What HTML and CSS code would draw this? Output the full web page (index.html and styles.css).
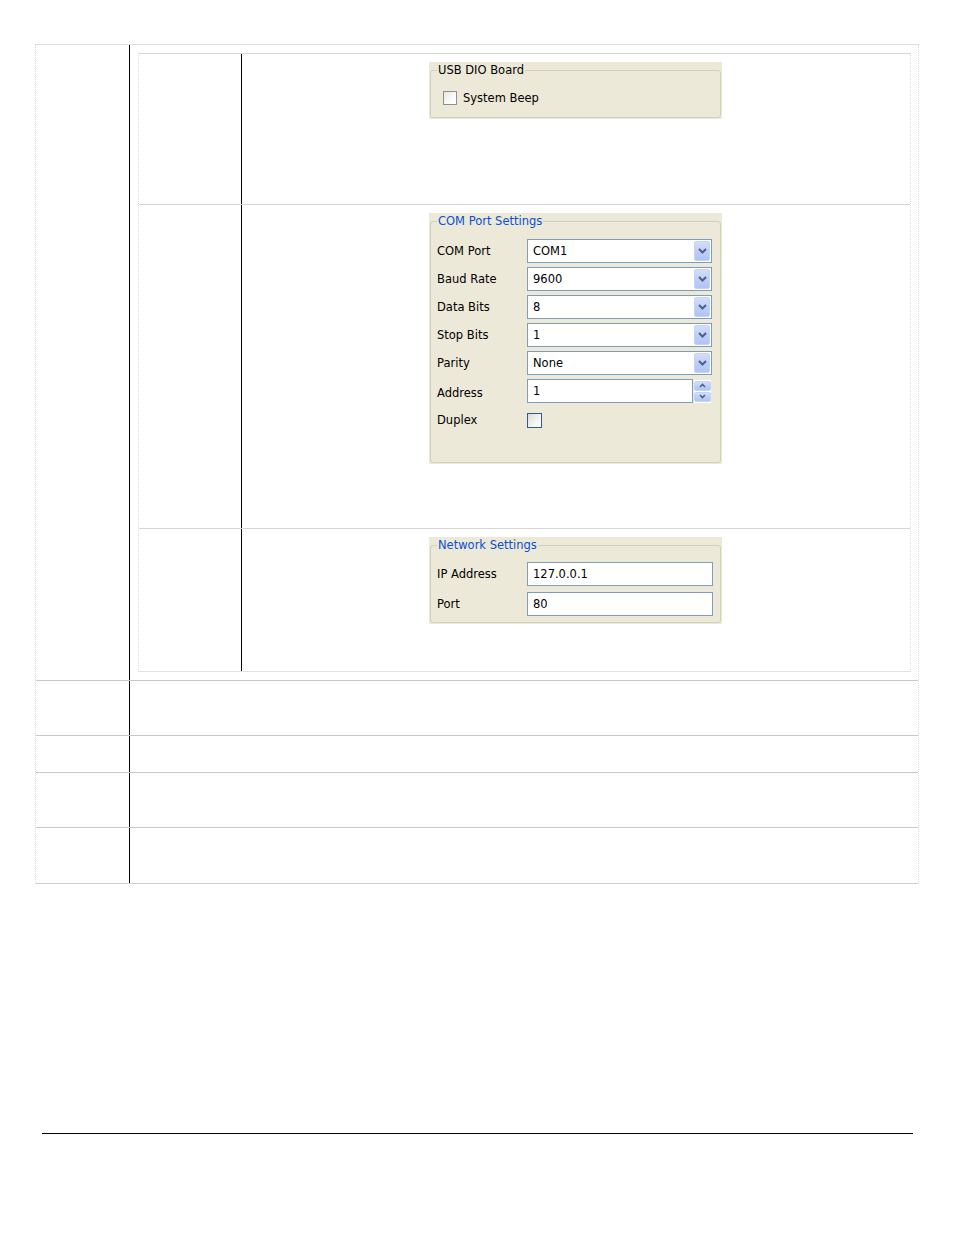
FILE: index.html
```html
<!DOCTYPE html>
<html>
<head>
<meta charset="utf-8">
<link rel="stylesheet" href="styles.css">
</head>
<body>
<div class="page">
  <div class="doc">
    <div class="row r1">
      <div class="c1"></div>
      <div class="c2">
        <div class="inner">
          <div class="irow ir1">
            <div class="ic1"></div>
            <div class="ic2">
              <div class="panel">
                <fieldset class="group">
                  <legend class="plain">USB DIO Board</legend>
                  <div class="beep-row">
                    <span class="check grey"></span>
                    <span class="lbl">System Beep</span>
                  </div>
                </fieldset>
              </div>
            </div>
          </div>
          <div class="irow ir2">
            <div class="ic1"></div>
            <div class="ic2">
              <div class="panel">
                <fieldset class="group com">
                  <legend class="blue">COM Port Settings</legend>
                  <div class="frow first">
                    <span class="flabel">COM Port</span>
                    <div class="combo"><span class="val">COM1</span><span class="drop"><svg width="9" height="6" viewBox="0 0 9 6"><path d="M1 1 L4.5 4.5 L8 1" fill="none" stroke="#4d6185" stroke-width="2"/></svg></span></div>
                  </div>
                  <div class="frow">
                    <span class="flabel">Baud Rate</span>
                    <div class="combo"><span class="val">9600</span><span class="drop"><svg width="9" height="6" viewBox="0 0 9 6"><path d="M1 1 L4.5 4.5 L8 1" fill="none" stroke="#4d6185" stroke-width="2"/></svg></span></div>
                  </div>
                  <div class="frow">
                    <span class="flabel">Data Bits</span>
                    <div class="combo"><span class="val">8</span><span class="drop"><svg width="9" height="6" viewBox="0 0 9 6"><path d="M1 1 L4.5 4.5 L8 1" fill="none" stroke="#4d6185" stroke-width="2"/></svg></span></div>
                  </div>
                  <div class="frow">
                    <span class="flabel">Stop Bits</span>
                    <div class="combo"><span class="val">1</span><span class="drop"><svg width="9" height="6" viewBox="0 0 9 6"><path d="M1 1 L4.5 4.5 L8 1" fill="none" stroke="#4d6185" stroke-width="2"/></svg></span></div>
                  </div>
                  <div class="frow">
                    <span class="flabel">Parity</span>
                    <div class="combo"><span class="val">None</span><span class="drop"><svg width="9" height="6" viewBox="0 0 9 6"><path d="M1 1 L4.5 4.5 L8 1" fill="none" stroke="#4d6185" stroke-width="2"/></svg></span></div>
                  </div>
                  <div class="frow">
                    <span class="flabel low">Address</span>
                    <div class="spinwrap">
                      <div class="field addr"><span class="val">1</span></div>
                      <div class="spin">
                        <span class="sbtn"><svg width="7" height="5" viewBox="0 0 7 5"><path d="M1 4 L3.5 1.5 L6 4" fill="none" stroke="#4d6185" stroke-width="1.6"/></svg></span>
                        <span class="sbtn"><svg width="7" height="5" viewBox="0 0 7 5"><path d="M1 1 L3.5 3.5 L6 1" fill="none" stroke="#4d6185" stroke-width="1.6"/></svg></span>
                      </div>
                    </div>
                  </div>
                  <div class="frow duplex">
                    <span class="flabel">Duplex</span>
                    <span class="check blue-box"></span>
                  </div>
                </fieldset>
              </div>
            </div>
          </div>
          <div class="irow ir3">
            <div class="ic1"></div>
            <div class="ic2">
              <div class="panel">
                <fieldset class="group net">
                  <legend class="blue">Network Settings</legend>
                  <div class="frow first">
                    <span class="flabel">IP Address</span>
                    <div class="field wide"><span class="val">127.0.0.1</span></div>
                  </div>
                  <div class="frow">
                    <span class="flabel">Port</span>
                    <div class="field wide"><span class="val">80</span></div>
                  </div>
                </fieldset>
              </div>
            </div>
          </div>
        </div>
      </div>
    </div>
    <div class="row r2"><div class="c1"></div><div class="c2"></div></div>
    <div class="row r3"><div class="c1"></div><div class="c2"></div></div>
    <div class="row r4"><div class="c1"></div><div class="c2"></div></div>
    <div class="row r5"><div class="c1"></div><div class="c2"></div></div>
  </div>
  <div class="footer-line"></div>
</div>
</body>
</html>
```
FILE: styles.css
```css
html, body {
  margin: 0;
  padding: 0;
  background: #fff;
}
body {
  font-family: "DejaVu Sans", Verdana, sans-serif;
  font-size: 11.5px;
  color: #000;
}
.page {
  padding-top: 44px;
}
.doc {
  margin-left: 35px;
  width: 884px;
  box-sizing: border-box;
  border-left: 1px dotted #dcdcdc;
  border-right: 1px dotted #dcdcdc;
  border-top: 1px solid #dedede;
  border-bottom: 1px solid #cfcfcf;
}
.row {
  display: grid;
  grid-template-columns: 94px 1fr;
}
.row + .row {
  border-top: 1px solid #c8c8c8;
}
.c1 {
  border-right: 1px solid #000;
  box-sizing: border-box;
}
.r1 { height: 635px; }
.r2 { height: 54px; }
.r3 { height: 36px; }
.r4 { height: 54px; }
.r5 { height: 55px; }

.inner {
  margin: 8px 0 0 8px;
  width: 773px;
  box-sizing: border-box;
  border-top: 1px solid #d6d6d6;
  border-bottom: 1px solid #e2e2e2;
  border-left: 1px dotted #dedede;
  border-right: 1px dotted #dedede;
}
.irow {
  display: grid;
  grid-template-columns: 103px 1fr;
}
.irow + .irow {
  border-top: 1px solid #d6d6d6;
}
.ir1 { height: 150px; }
.ir2 { height: 323px; }
.ir3 { height: 142px; }
.ic1 {
  border-right: 1px solid #000;
  box-sizing: border-box;
}
.ic2 {
  padding: 8px 0 0 187px;
}

.panel {
  width: 293px;
  box-sizing: border-box;
  background: #ece9d8;
  padding: 1px 1px 1px 1px;
}
.group {
  margin: 0;
  border: 1px solid #d0d0bf;
  border-radius: 3px;
  padding: 0 6px 12px 6px;
}
.group legend {
  padding: 0 1px;
  line-height: 15px;
  font-size: 11.5px;
}
legend.plain { color: #000; }
legend.blue { color: #0b4fd3; }

.beep-row {
  display: flex;
  align-items: center;
  margin: 12px 0 0 6px;
  height: 15px;
}
.check {
  display: inline-block;
  width: 14px;
  height: 14px;
  box-sizing: border-box;
}
.check.grey {
  border: 1px solid #8e8f8f;
  background: linear-gradient(135deg, #e6e6e0 0%, #fafaf8 60%, #ffffff 100%);
}
.lbl {
  margin-left: 6px;
}

.com { padding-bottom: 30px; }
.net { padding-bottom: 6px; }

.frow {
  display: flex;
  align-items: center;
  height: 24px;
  margin-top: 4px;
}
.frow.first { margin-top: 10px; }
.net .frow { margin-top: 6px; }
.net .frow.first { margin-top: 9px; }
.frow.duplex { margin-top: 5px; }
.flabel {
  width: 90px;
  flex: none;
}
.flabel.low {
  padding-top: 4px;
}
.combo {
  width: 185px;
  height: 24px;
  box-sizing: border-box;
  border: 1px solid #7f9db9;
  background: #fff;
  display: flex;
  align-items: center;
  justify-content: space-between;
  padding: 1px;
}
.val {
  padding-left: 4px;
}
.drop {
  width: 16px;
  height: 20px;
  box-sizing: border-box;
  border: 1px solid #c3d3fd;
  background: linear-gradient(180deg, #d2defa 0%, #bccdf6 55%, #b0c4f4 100%);
  border-radius: 2px;
  display: flex;
  align-items: center;
  justify-content: center;
}
.field {
  height: 24px;
  box-sizing: border-box;
  border: 1px solid #7f9db9;
  background: #fff;
  display: flex;
  align-items: center;
  padding: 1px;
}
.field.addr { width: 166px; }
.field.wide { width: 186px; }
.spinwrap {
  display: flex;
  align-items: center;
  gap: 1px;
}
.spin {
  display: flex;
  flex-direction: column;
  gap: 1px;
  width: 17px;
  height: 23px;
  background: #fff;
  padding: 1px 0;
  box-sizing: border-box;
}
.sbtn {
  flex: 1;
  box-sizing: border-box;
  border: 1px solid #c3d3fd;
  border-radius: 2px;
  background: linear-gradient(180deg, #d2defa 0%, #bccdf6 55%, #b0c4f4 100%);
  display: flex;
  align-items: center;
  justify-content: center;
}
.check.blue-box {
  width: 15px;
  height: 15px;
  border: 1px solid #2e5c8c;
  background: linear-gradient(135deg, #dcdcd6 0%, #f4f4f2 60%, #ffffff 100%);
}

.footer-line {
  margin: 249px 0 0 42px;
  width: 871px;
  border-top: 1px solid #000;
}
```
